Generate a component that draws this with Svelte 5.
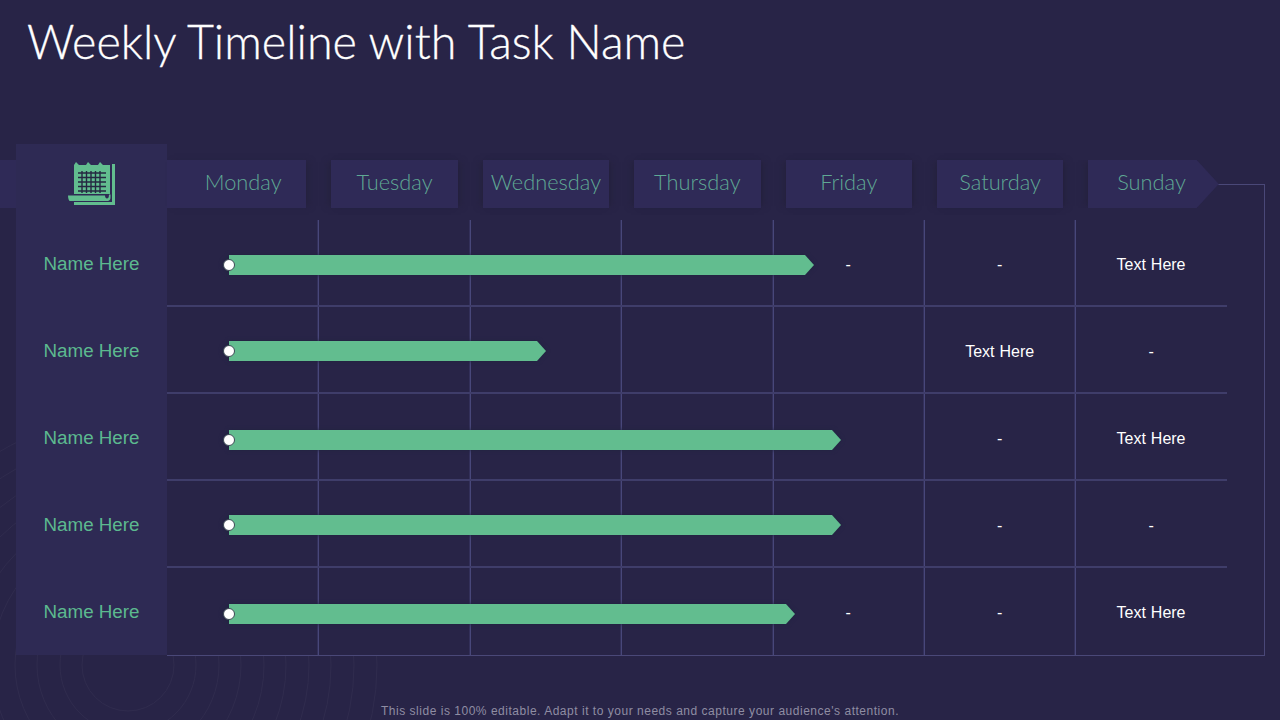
<script>
	const days = ['Monday', 'Tuesday', 'Wednesday', 'Thursday', 'Friday', 'Saturday', 'Sunday'];

	// end = bar length in px, top = offset inside the row
	const rows = [
		{ name: 'Name Here', end: 585, top: 35, cells: ['', '', '', '', '-', '-', 'Text Here'] },
		{ name: 'Name Here', end: 317, top: 34, cells: ['', '', '', '', '', 'Text Here', '-'] },
		{ name: 'Name Here', end: 612, top: 36, cells: ['', '', '', '', '', '-', 'Text Here'] },
		{ name: 'Name Here', end: 612, top: 34, cells: ['', '', '', '', '', '-', '-'] },
		{ name: 'Name Here', end: 566, top: 36, cells: ['', '', '', '', '-', '-', 'Text Here'] }
	];

	const rings = [46, 68, 91, 113, 136, 158, 181, 203, 226, 249];
</script>

<div class="slide">
	<svg class="rings" width="400" height="320" viewBox="0 0 400 320">
		{#each rings as r}
			<circle cx="128" cy="265" {r} />
		{/each}
	</svg>

	<h1>Weekly Timeline with Task Name</h1>

	<div class="board">
		<div class="strip"></div>
		<div class="frame"></div>

		<div class="names">
			<div class="icon">
				<svg width="50" height="46" viewBox="0 0 50 46">
					<!-- back sheet -->
					<path class="green" d="M44 3h3v41H6v-3h38z" />
					<!-- front sheet with binding notches -->
					<path class="green" d="M6 4l2-3 3 3h7l2-3 3 3h7l2-3 3 3h7v29H6z" />
					<!-- rolled bottom edge -->
					<path class="green" d="M0 34.500h37c0 2 1 3 2 3 1 0 2-1 2-4h1.500v3c0 2-1 3.500-3 3.500H2c-1 0-2-2-2-5.500z" />
					<path class="dark" d="M10 12h28M10 16.500h28M10 21h28M10 25.500h28M10 30h28M14 10v22M18.500 10v22M23 10v22M27.500 10v22M32 10v22" />
				</svg>
			</div>
			{#each rows as row}
				<div class="name">{row.name}</div>
			{/each}
		</div>

		<div class="chart">
			<div class="days">
				{#each days as day, i}
					<div class="day" class:first={i === 0} class:last={i === 6}>
						<span>{day}</span>
					</div>
				{/each}
			</div>

			<div class="grid">
				{#each rows as row}
					<div class="row">
						{#each row.cells as cell}
							<div class="cell">{cell}</div>
						{/each}
						<div class="bar" style="width: {row.end}px; top: {row.top}px">
							<div class="fill"></div>
							<i class="dot"></i>
						</div>
					</div>
				{/each}
			</div>
		</div>
	</div>

	<p class="note">This slide is 100% editable. Adapt it to your needs and capture your audience's attention.</p>
</div>

<style>
	:global(body) {
		margin: 0;
		background: #282447;
	}

	.slide {
		position: relative;
		width: 1280px;
		height: 720px;
		overflow: hidden;
		background: #282447;
		font-family: 'Liberation Sans', Arial, sans-serif;
	}

	.rings {
		position: absolute;
		left: 0;
		top: 400px;
	}

	.rings circle {
		fill: none;
		stroke: #302c4e;
		stroke-width: 1;
	}

	h1 {
		position: relative;
		margin: 0;
		height: 144px;
		padding: 12px 0 0 27px;
		box-sizing: border-box;
		font-family: Lato, sans-serif;
		font-weight: 300;
		font-size: 46.7px;
		line-height: 58px;
		color: #fff;
		-webkit-text-stroke: 0.3px #fff;
	}

	.board {
		position: relative;
		display: grid;
		grid-template-columns: 151px 1060px;
		margin-left: 16px;
		height: 512px;
	}

	.strip {
		position: absolute;
		left: -16px;
		top: 16px;
		width: 16px;
		height: 48px;
		background: #2f2a57;
	}

	.frame {
		position: absolute;
		left: 1190px;
		top: 40px;
		width: 58px;
		height: 470px;
		border-top: 1px solid #4a4878;
		border-right: 1px solid #4a4878;
		border-bottom: 1px solid #4a4878;
	}

	.names {
		position: relative;
		background: #2e2a54;
		height: 511px;
	}

	.icon {
		height: 76px;
		box-sizing: border-box;
		padding: 17px 0 0 52px;
	}

	.icon svg {
		display: block;
	}

	.green {
		fill: #62bd8f;
	}

	.dark {
		fill: none;
		stroke: #252842;
		stroke-width: 1.4;
	}

	.name {
		height: 87px;
		display: flex;
		align-items: center;
		justify-content: center;
		padding-top: 1px;
		box-sizing: border-box;
		font-size: 18.8px;
		color: #5cb98f;
	}

	.chart {
		position: relative;
	}

	.days {
		display: grid;
		grid-template-columns: repeat(7, 151.4px);
		margin-top: 16px;
		height: 48px;
	}

	.day {
		display: flex;
		align-items: center;
		justify-content: center;
		margin-left: 13px;
		margin-right: 12px;
		background: #2f2a57;
		font-family: Lato, sans-serif;
		font-weight: 300;
		font-size: 21.8px;
		color: #5fa894;
		box-shadow: -5px 0 6px -2px #25223f, 5px 0 6px -2px #25223f;
	}

	.day span {
		position: relative;
		top: -3px;
	}

	.day.first {
		margin-left: 0;
		margin-right: 12px;
		padding-left: 13px;
		box-shadow: 5px 0 6px -2px #25223f;
	}

	.day.last {
		margin-right: 8px;
		padding-right: 4px;
		clip-path: polygon(-12px 0, calc(100% - 22px) 0, 100% 50%, calc(100% - 22px) 100%, -12px 100%);
	}

	.grid {
		margin-top: 12px;
		width: 1060px;
	}

	.row {
		position: relative;
		display: grid;
		grid-template-columns: repeat(7, 151.4px);
		height: 87px;
		box-sizing: border-box;
		background: #282447;
		border-bottom: 2px solid #3f3d6a;
	}

	.row:last-child {
		height: 88px;
		border-bottom: 1px solid #4a4878;
	}

	.cell {
		display: flex;
		align-items: center;
		justify-content: center;
		color: #fff;
		font-size: 16px;
		word-spacing: 0.5px;
		padding-top: 5px;
		padding-right: 1px;
	}

	.row:last-child .cell {
		padding-top: 3px;
	}

	.cell + .cell {
		border-left: 1px solid #48477a;
		box-shadow: -1px 0 0 #33305a;
	}

	.bar {
		position: absolute;
		left: 62px;
		height: 20px;
		filter: drop-shadow(0 0 2px #1f2340);
	}

	.fill {
		height: 100%;
		background: #62bd8f;
		clip-path: polygon(0 0, calc(100% - 9px) 0, 100% 50%, calc(100% - 9px) 100%, 0 100%);
	}

	.dot {
		position: absolute;
		left: -6px;
		top: 4px;
		width: 12px;
		height: 12px;
		box-sizing: border-box;
		border-radius: 50%;
		background: #fff;
		border: 1px solid #3d4a55;
	}

	.note {
		position: relative;
		margin: 0;
		padding-top: 48px;
		text-align: center;
		font-size: 12px;
		letter-spacing: 0.52px;
		color: #8f8da3;
		line-height: 14px;
	}
</style>
